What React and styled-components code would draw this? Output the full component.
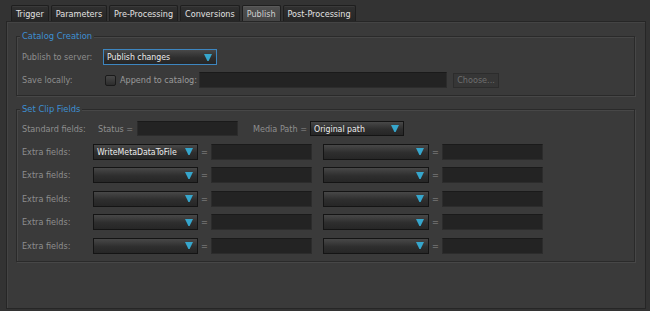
import styled, { createGlobalStyle } from "styled-components";

const GlobalStyle = createGlobalStyle`
  html, body {
    margin: 0;
    padding: 0;
    background: #333333;
  }
  body {
    font-family: "DejaVu Sans Condensed", "DejaVu Sans", sans-serif;
    font-size: 9px;
    color: #909090;
  }
`;

const tabs = [
  "Trigger",
  "Parameters",
  "Pre-Processing",
  "Conversions",
  "Publish",
  "Post-Processing",
];

const Page = styled.div`
  width: 650px;
  height: 311px;
  box-sizing: border-box;
  padding: 5px 4px 2px 6px;
  display: flex;
  flex-direction: column;
`;

const TabBar = styled.div`
  display: flex;
  gap: 2px;
  padding-left: 5px;
  height: 16px;
`;

const Tab = styled.div`
  box-sizing: border-box;
  height: 16px;
  padding: 0 4px;
  display: flex;
  align-items: center;
  border: 1px solid #1e1e1e;
  border-bottom: none;
  border-radius: 2px 2px 0 0;
  color: ${(p) => (p.$active ? "#d0d0d0" : "#e2e2e2")};
  background: ${(p) =>
    p.$active
      ? "linear-gradient(#505050, #454545)"
      : "linear-gradient(#303030, #262626)"};
  box-shadow: inset 0 1px 0 ${(p) => (p.$active ? "#5a5a5a" : "#3a3a3a")};
`;

const Panel = styled.div`
  flex: 1;
  border: 1px solid #262626;
  box-shadow: inset 1px 1px 0 #444444;
  background: #3a3a3a;
  padding: 14px 10px 0 9px;
  display: flex;
  flex-direction: column;
  gap: 13px;
`;

const Group = styled.div`
  position: relative;
  border: 1px solid #2a2a2a;
  box-shadow: 1px 1px 0 #474747, inset 1px 1px 0 #474747;
  padding: ${(p) => p.$pad};
  display: flex;
  flex-direction: column;
  gap: ${(p) => p.$gap};
`;

const Legend = styled.span`
  position: absolute;
  top: -7px;
  left: 3px;
  padding: 0 2px;
  background: #3a3a3a;
  color: #3d8fd2;
  font-size: 9.3px;
  line-height: 12px;
`;

const Row = styled.div`
  display: flex;
  align-items: center;
  height: ${(p) => p.$h || "16px"};
`;

const Label = styled.span`
  width: ${(p) => p.$w};
  flex: none;
  color: #8e8e8e;
  white-space: nowrap;
`;

const Select = styled.div`
  box-sizing: border-box;
  width: ${(p) => p.$w};
  height: ${(p) => p.$h || "16px"};
  flex: none;
  display: flex;
  align-items: center;
  justify-content: space-between;
  padding: 0 4px 0 3px;
  border: 1px solid ${(p) => (p.$focus ? "#3d86c0" : "#141414")};
  background: linear-gradient(#484848, #2e2e2e 55%, #262626);
  color: #ededed;
  font-size: 8.7px;
  white-space: nowrap;
`;

const Arrow = () => (
  <svg width="8" height="7" viewBox="0 0 8 7">
    <path d="M0 0 H8 L4.6 7 H3.4 Z" fill="#36a6cc" />
  </svg>
);

const Field = styled.div`
  box-sizing: border-box;
  width: ${(p) => p.$w};
  height: ${(p) => p.$h || "16px"};
  flex: none;
  background: #232323;
  border: 1px solid #2c2c2c;
  border-top-color: #1a1a1a;
`;

const Eq = styled.span`
  flex: none;
  width: ${(p) => p.$w};
  text-align: center;
  color: #6a6a6a;
  font-weight: bold;
`;

const Check = styled.span`
  box-sizing: border-box;
  width: 11px;
  height: 11px;
  margin: 0 4px 0 2px;
  border: 1px solid #1a1a1a;
  border-radius: 2px;
  background: linear-gradient(#484848, #2c2c2c);
  flex: none;
`;

const Button = styled.div`
  box-sizing: border-box;
  width: 46px;
  height: 15px;
  margin-left: 6px;
  display: flex;
  align-items: center;
  justify-content: center;
  border: 1px solid #2c2c2c;
  background: #363636;
  color: #6e6e6e;
`;

const Plain = styled.span`
  flex: none;
  width: ${(p) => p.$w || "auto"};
  margin-left: ${(p) => p.$ml || "0"};
  color: ${(p) => p.$c || "#8e8e8e"};
  white-space: nowrap;
`;

const ExtraRow = ({ value }) => (
  <Row>
    <Label $w="71px">Extra fields:</Label>
    <Select $w="105px">
      <span>{value}</span>
      <Arrow />
    </Select>
    <Eq $w="13px">=</Eq>
    <Field $w="101px" />
    <Eq $w="11px" />
    <Select $w="106px">
      <span />
      <Arrow />
    </Select>
    <Eq $w="13px">=</Eq>
    <Field $w="101px" />
  </Row>
);

export default function App() {
  return (
    <>
      <GlobalStyle />
      <Page>
        <TabBar>
          {tabs.map((t) => (
            <Tab key={t} $active={t === "Publish"}>
              {t}
            </Tab>
          ))}
        </TabBar>
        <Panel>
          <Group $pad="12px 0 7px 5px" $gap="7px">
            <Legend>Catalog Creation</Legend>
            <Row>
              <Label $w="81px">Publish to server:</Label>
              <Select $w="114px" $focus>
                <span>Publish changes</span>
                <Arrow />
              </Select>
            </Row>
            <Row>
              <Label $w="81px">Save locally:</Label>
              <Check />
              <Plain $c="#9a9a9a" $w="79px">
                Append to catalog:
              </Plain>
              <Field $w="248px" />
              <Button>Choose...</Button>
            </Row>
          </Group>
          <Group $pad="11px 0 7px 5px" $gap="7.6px">
            <Legend>Set Clip Fields</Legend>
            <Row $h="15px">
              <Label $w="76px">Standard fields:</Label>
              <Plain $w="39px">Status =</Plain>
              <Field $w="101px" $h="15px" />
              <Plain $w="57px" $ml="15px">
                Media Path =
              </Plain>
              <Select $w="94px" $h="15px">
                <span>Original path</span>
                <Arrow />
              </Select>
            </Row>
            <ExtraRow value="WriteMetaDataToFile" />
            <ExtraRow />
            <ExtraRow />
            <ExtraRow />
            <ExtraRow />
          </Group>
        </Panel>
      </Page>
    </>
  );
}
